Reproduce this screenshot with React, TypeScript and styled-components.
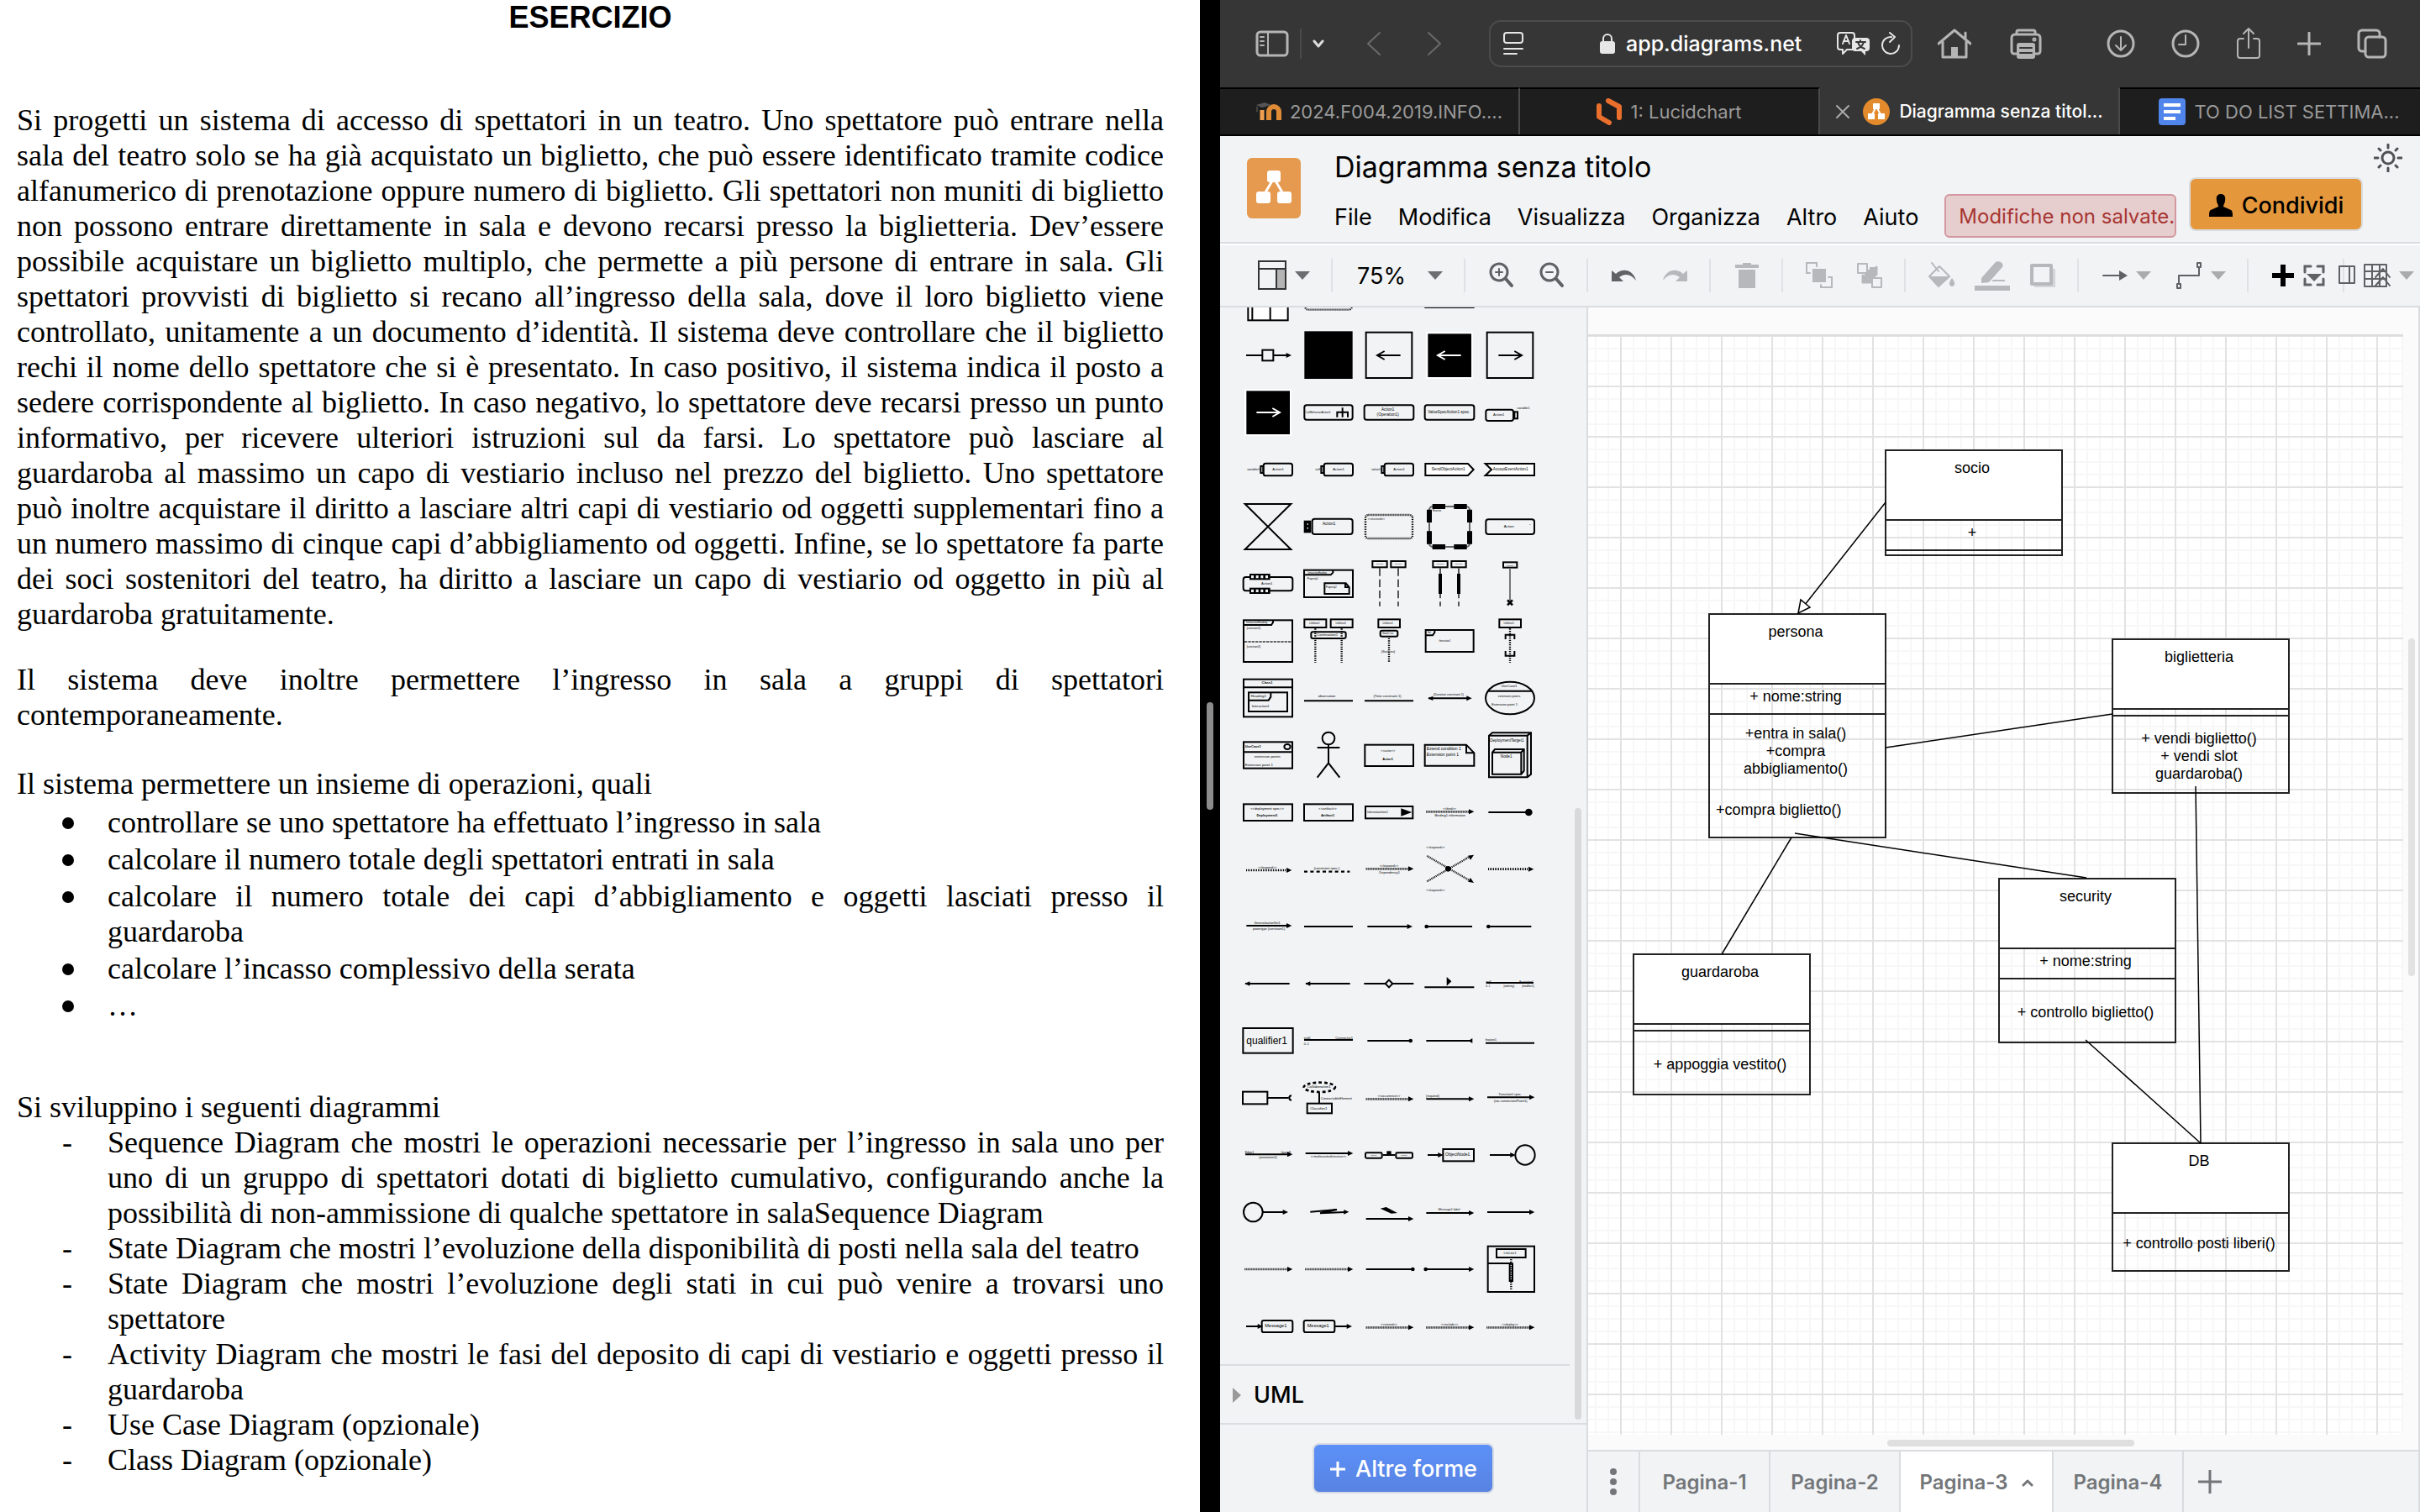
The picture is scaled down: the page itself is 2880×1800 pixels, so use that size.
import React from "react";
import styled, { createGlobalStyle, css } from "styled-components";

const ui = `Inter, "Liberation Sans", sans-serif`;
const LINE = "#dadce0";
const PANEL = "#f1f3f5";

const Global = createGlobalStyle`
  * { box-sizing: border-box; }
  html, body { margin: 0; height: 100%; background: #000; }
  #root { height: 100%; }
  body { overflow: hidden; }
  button, input, select { font: inherit; color: inherit; margin: 0; padding: 0; border: 0; background: none; border-radius: 0; }
`;

const Screen = styled.div`
  display: grid;
  grid-template-columns: minmax(0, 1fr) 24px minmax(0, 1fr);
  grid-template-rows: minmax(0, 1fr);
  height: 100vh;
  min-height: 900px;
  background: #000;
`;

/* ---------- left: exercise text ---------- */

const Doc = styled.article`
  overflow: hidden;
  background: #fff;
  color: #000;
  padding: 0 43px 0 20px;
  font: 36px/42px "Liberation Serif", "Times New Roman", serif;
  text-align: justify;
`;
const DocTitle = styled.h1`
  margin: 0;
  text-align: center;
  font: bold 36px/42px "Liberation Sans", Arial, sans-serif;
`;
const Para = styled.p<{ $gap: number }>`
  margin: ${(p) => p.$gap}px 0 0;
`;
const List = styled.ul<{ $gap: number }>`
  list-style: none;
  margin: ${(p) => p.$gap * 2}px 0 0;
  padding: 0 0 0 54px;
  display: flex;
  flex-direction: column;
  gap: ${(p) => p.$gap}px;
`;
const Item = styled.li<{ $mark: "dot" | "dash" }>`
  display: grid;
  grid-template-columns: 54px 1fr;
  &::before {
    ${(p) =>
      p.$mark === "dot"
        ? css`
            content: "";
            width: 14px;
            height: 14px;
            border-radius: 50%;
            background: #000;
            margin-top: 15px;
          `
        : css`
            content: "-";
          `}
  }
`;

const Divider = styled.div`
  display: flex;
  align-items: center;
  justify-content: center;
  background: #000;
  &::after {
    content: "";
    width: 8px;
    height: 128px;
    border-radius: 4px;
    background: #8c8c8c;
  }
`;

/* ---------- right: browser ---------- */

const Browser = styled.section`
  display: flex;
  flex-direction: column;
  overflow: hidden;
  background: ${PANEL};
  font-family: ${ui};
`;
const Chrome = styled.header`
  flex: 0 0 104px;
  display: flex;
  align-items: center;
  padding: 0 39px 0 42px;
  background: #363636;
  color: #b5b5b5;
`;
const ChromeGroup = styled.div<{ $gap: number; $before?: number }>`
  flex: 0 0 auto;
  display: flex;
  align-items: center;
  gap: ${(p) => p.$gap}px;
  margin-left: ${(p) => p.$before ?? 0}px;
`;
const IconButton = styled.button`
  display: flex;
  align-items: center;
  justify-content: center;
`;
const Rule = styled.span`
  width: 2px;
  height: 36px;
  background: #4a4a4a;
`;
const Address = styled.div`
  flex: 1 1 504px;
  height: 56px;
  margin-left: 56px;
  display: flex;
  align-items: center;
  justify-content: space-between;
  padding: 0 12px 0 15px;
  border: 2px solid #4c4c4c;
  border-radius: 14px;
  color: #e6e6e6;
`;
const Host = styled.label`
  display: flex;
  align-items: center;
  gap: 13px;
  padding-left: 62px;
`;
const HostInput = styled.input`
  width: 222px;
  color: #fff;
  font: 500 25px/32px ${ui};
`;
const TabStrip = styled.nav`
  flex: 0 0 58px;
  display: grid;
  grid-template-columns: repeat(4, minmax(0, 1fr));
  border-bottom: 2px solid #000;
`;
const Tab = styled.button<{ $on?: boolean; $long?: boolean }>`
  display: flex;
  align-items: center;
  justify-content: center;
  gap: 10px;
  border-top: 2px solid ${(p) => (p.$on ? "#363636" : "#000")};
  border-right: 2px solid #4a4a4a;
  background: ${(p) => (p.$on ? "#363636" : "#1e1e1e")};
  color: ${(p) => (p.$on ? "#fff" : "#9a9a9a")};
  padding-left: ${(p) => (p.$long ? 22 : 0)}px;
  font: ${(p) => (p.$on ? "500 21px" : "400 22px")}/28px ${ui};
  white-space: nowrap;
  &:last-child { border-right: 0; }
`;

/* ---------- diagram editor ---------- */

const AppBar = styled.div`
  flex: 0 0 128px;
  display: flex;
  padding-left: 32px;
  border-bottom: 2px solid ${LINE};
  color: #000;
`;
const Logo = styled.div`
  flex: 0 0 64px;
  height: 72px;
  margin: 26px 40px 0 0;
  border-radius: 6px;
  background: #e59a50;
`;
const Heading = styled.div`
  flex: 1 1 auto;
  min-width: 0;
  display: flex;
  flex-direction: column;
`;
const FileName = styled.h2`
  margin: 14px 0 0;
  font: 400 34px/46px ${ui};
`;
const MenuRow = styled.div`
  display: flex;
  align-items: center;
  height: 52px;
  margin-top: 9px;
  gap: 31px;
`;
const MenuItem = styled.button`
  padding-top: 3px;
  font: 400 27px/36px ${ui};
`;
const Unsaved = styled.button`
  flex: 0 0 274px;
  height: 52px;
  padding: 2px 0 0 15px;
  text-align: left;
  white-space: nowrap;
  border: 2px solid #d3989f;
  border-radius: 6px;
  background: #e6cdce;
  color: #a73531;
  font: 400 24px/34px ${ui};
`;
const Actions = styled.div`
  display: flex;
  flex: 0 0 275px;
`;
const Share = styled.button`
  flex: 0 0 207px;
  height: 64px;
  margin: 49px 13px 0 0;
  padding-top: 4px;
  display: flex;
  align-items: center;
  justify-content: center;
  gap: 10px;
  border: 2px solid ${LINE};
  border-radius: 8px;
  background: #e5983b;
  font: 500 27px/36px ${ui};
`;
const ThemeButton = styled(IconButton)`
  width: 34px;
  height: 34px;
  margin-top: 9px;
`;
const Tools = styled.div`
  flex: 0 0 76px;
  display: flex;
  align-items: center;
  border-top: 2px solid #fff;
  border-bottom: 2px solid ${LINE};
  overflow: hidden;
`;
const ToolGroup = styled.div<{ $start?: boolean; $tight?: boolean }>`
  flex: 0 0 auto;
  display: flex;
  align-items: center;
  height: 40px;
  gap: ${(p) => (p.$tight ? 10 : 0)}px;
  padding: 0 ${(p) => (p.$tight ? 0 : p.$start ? 12 : 11)}px 0 ${(p) => (p.$start ? 32 : p.$tight ? 27 : 13)}px;
  border-right: ${(p) => (p.$tight ? 0 : 2)}px solid #dfe1e4;
`;
const Tool = styled.button<{ $w?: number; $dim?: boolean }>`
  flex: 0 0 ${(p) => p.$w ?? 60}px;
  height: 40px;
  display: flex;
  align-items: center;
  justify-content: center;
  gap: 10px;
  color: #5f6265;
  opacity: ${(p) => (p.$dim ? 0.4 : 1)};
`;
const ZoomBox = styled.label`
  width: 132px;
  display: flex;
  align-items: center;
  justify-content: space-between;
  padding: 0 14px 0 16px;
`;
const ZoomSelect = styled.select`
  appearance: none;
  width: 70px;
  padding-top: 2px;
  color: #000;
  font: 400 27px/36px ${ui};
`;

const Workspace = styled.div`
  flex: 1 1 0;
  min-height: 0;
  display: flex;
`;
const Sidebar = styled.aside`
  flex: 0 0 438px;
  display: flex;
  flex-direction: column;
  border-right: 2px solid ${LINE};
`;
const Library = styled.div`
  flex: 1 1 0;
  min-height: 0;
  display: flex;
  border-bottom: 2px solid ${LINE};
`;
const LibraryBody = styled.div`
  flex: 1 1 0;
  display: flex;
  flex-direction: column;
  justify-content: flex-end;
  overflow: hidden;
`;
const ShapeGrid = styled.div`
  flex: 0 0 auto;
  display: grid;
  grid-template-columns: repeat(5, 72px);
  grid-auto-rows: 68px;
  padding: 0 0 11px 21px;
`;
const Section = styled.button`
  flex: 0 0 70px;
  display: flex;
  align-items: center;
  gap: 15px;
  padding: 2px 0 0 15px;
  border-top: 2px solid ${LINE};
  color: #000;
  font: 500 27px/34px ${ui};
`;
const LibraryGutter = styled.div`
  flex: 0 0 20px;
  display: flex;
  align-items: flex-end;
  padding: 0 6px 4px;
  &::after {
    content: "";
    width: 8px;
    height: 55%;
    border-radius: 4px;
    background: #d8d9db;
  }
`;
const SidebarFoot = styled.div`
  flex: 0 0 104px;
  display: flex;
  align-items: center;
  justify-content: center;
`;
const MoreShapes = styled.button`
  width: 216px;
  height: 60px;
  padding-top: 2px;
  display: flex;
  align-items: center;
  justify-content: center;
  gap: 11px;
  border: 2px solid #d6dae2;
  border-radius: 8px;
  background: linear-gradient(#5c90f7, #5883e2);
  color: #fff;
  font: 500 27px/36px ${ui};
`;

const Stage = styled.main`
  flex: 1 1 0;
  min-width: 0;
  display: flex;
  flex-direction: column;
  background: #fbfbfb;
  border-right: 2px solid ${LINE};
`;
const StageRow = styled.div`
  flex: 1 1 0;
  min-height: 0;
  display: flex;
`;
const SheetColumn = styled.div`
  flex: 1 1 0;
  min-width: 0;
  padding-top: 32px;
  display: flex;
`;
const Sheet = styled.div`
  position: relative;
  flex: 1 1 0;
  overflow: hidden;
  border-top: 2px solid #dcdcdc;
  background-color: #fff;
  background-image:
    linear-gradient(to right, #e2e2e2 2px, transparent 2px),
    linear-gradient(#e2e2e2 2px, transparent 2px),
    linear-gradient(to right, #f7f7f7 2px, transparent 2px),
    linear-gradient(#f7f7f7 2px, transparent 2px);
  background-size: 60px 60px, 60px 60px, 15px 15px, 15px 15px;
  background-position: 38px 0, 0 59px, 8px 0, 0 14px;
`;
const VGutter = styled.div`
  flex: 0 0 18px;
  padding: 394px 4px 0 6px;
  &::after {
    content: "";
    display: block;
    width: 8px;
    height: 402px;
    border-radius: 4px;
    background: #e2e2e2;
  }
`;
const HGutter = styled.div`
  flex: 0 0 18px;
  display: flex;
  justify-content: center;
  align-items: center;
  padding: 2px 0 0 18px;
  &::after {
    content: "";
    width: 294px;
    height: 8px;
    border-radius: 4px;
    background: #dfdfdf;
  }
`;
const Wires = styled.svg`
  position: absolute;
  left: 0;
  top: 0;
`;
const ClassBox = styled.div<{ $x: number; $y: number }>`
  position: absolute;
  left: ${(p) => p.$x}px;
  top: ${(p) => p.$y}px;
  width: 212px;
  border: 2px solid #222;
  color: #000;
  text-align: center;
  font: 18px/21px "Liberation Sans", Helvetica, Arial, sans-serif;
`;
const pads = { head: "10px 4px 0 0", fields: "0 4px 6px 0", methods: "4px 4px 0 0" };
const Compartment = styled.div<{ $h: number; $kind: keyof typeof pads }>`
  height: ${(p) => p.$h}px;
  display: flex;
  flex-direction: column;
  align-items: center;
  justify-content: ${(p) => (p.$kind === "head" ? "flex-start" : "center")};
  padding: ${(p) => pads[p.$kind]};
  background: ${(p) => (p.$kind === "head" ? "#fff" : "transparent")};
  & + & { border-top: 2px solid #222; }
`;
const LeftNote = styled.span`
  align-self: flex-start;
  padding: 28px 0 14px 7px;
`;

const Pages = styled.nav`
  flex: 0 0 74px;
  display: flex;
  border-top: 2px solid ${LINE};
  background: ${PANEL};
  color: #737679;
`;
const PageMenu = styled(IconButton)`
  flex: 0 0 62px;
  border-right: 2px solid ${LINE};
`;
const PageTab = styled.button<{ $on?: boolean }>`
  flex: 0 0 ${(p) => (p.$on ? 182 : 155)}px;
  padding-top: 2px;
  display: flex;
  align-items: center;
  justify-content: center;
  gap: 16px;
  border-right: 2px solid ${LINE};
  background: ${(p) => (p.$on ? "#fff" : "transparent")};
  font: 600 24px/32px ${ui};
`;
const AddPage = styled(IconButton)`
  width: 62px;
`;

/* ---------- small drawing helpers ---------- */

type PicProps = { w: number; h: number; sw?: number; children: React.ReactNode };
const Pic = ({ w, h, sw = 3, children }: PicProps) => (
  <svg width={w} height={h} viewBox={`0 0 ${w} ${h}`} fill="none" stroke="currentColor" strokeWidth={sw} strokeLinecap="round" strokeLinejoin="round" aria-hidden="true">
    {children}
  </svg>
);
const Caret = ({ tone = "#6b6e71" }: { tone?: string }) => (
  <Pic w={18} h={12}>
    <path d="M0 1H18L9 11Z" fill={tone} stroke="none" />
  </Pic>
);
const Tree = ({ size }: { size: number }) => (
  <svg width={size} height={(size * 72) / 64} viewBox="0 0 64 72" aria-hidden="true">
    <path d="M32 24L19 46M32 24L45 46" stroke="#fff" strokeWidth="3" />
    <g fill="#fff">
      <rect x="24" y="15" width="16" height="14" rx="3" />
      <rect x="11" y="40" width="17" height="14" rx="3" />
      <rect x="36" y="40" width="17" height="14" rx="3" />
    </g>
  </svg>
);

/* Library thumbnails: each cell is drawn in a 216 x 204 box with its origin in the middle. */

const B = ({ x, y, x2, y2, r = 0, fill = "none" }: { x: number; y: number; x2: number; y2: number; r?: number; fill?: string }) => (
  <rect x={x} y={y} width={x2 - x} height={y2 - y} rx={r} fill={fill} />
);
const T = ({ x = 0, y, s = 11, a = "middle", b, children }: { x?: number; y: number; s?: number; a?: "start" | "middle" | "end"; b?: boolean; children: React.ReactNode }) => (
  <text x={x} y={y} fontSize={s} textAnchor={a} fontWeight={b ? 700 : 400} fill="#000" stroke="none">
    {children}
  </text>
);
type End = "none" | "tri" | "dot";
const A = ({ x, x2, y = 0, from = "none", to = "none", dots }: { x: number; x2: number; y?: number; from?: End; to?: End; dots?: boolean }) => (
  <g>
    <path d={`M${x} ${y}H${to === "tri" ? x2 - 10 : x2}`} strokeDasharray={dots ? "3 3" : undefined} strokeWidth={dots ? 8 : 6} />
    {to === "tri" && <path d={`M${x2 - 17} ${y - 9}L${x2 + 2} ${y}L${x2 - 17} ${y + 9}Z`} fill="#000" stroke="none" />}
    {to === "dot" && <circle cx={x2 - 5} cy={y} r="7" fill="#000" stroke="none" />}
    {from === "tri" && <path d={`M${x + 16} ${y - 8}L${x - 2} ${y}L${x + 16} ${y + 8}Z`} fill="#000" stroke="none" />}
    {from === "dot" && <circle cx={x + 5} cy={y} r="7" fill="#000" stroke="none" />}
  </g>
);
const BigArrow = ({ left, tone = "#000" }: { left?: boolean; tone?: string }) => (
  <path stroke={tone} d={left ? "M41 0H-40M-16 -15L-42 0L-16 15" : "M-41 0H40M16 -15L42 0L16 15"} />
);
const Inverted = ({ left }: { left?: boolean }) => (
  <g>
    <rect x="-84" y="-84" width="168" height="168" fill="#fff" stroke="none" />
    <rect x="-77" y="-77" width="155" height="155" fill="#000" stroke="none" />
    <BigArrow left={left} tone="#fff" />
  </g>
);
const LeftPin = ({ label }: { label: string }) => (
  <g>
    <B x={-16} y={-22} x2={87} y2={22} r={8} />
    <B x={-26} y={-12} x2={-17} y2={12} />
    <T x={36} y={2} s={12}>Action1</T>
    <T x={-30} y={2} a="end">{label}</T>
  </g>
);
const Lifelines = ({ bars }: { bars?: boolean }) => (
  <g>
    {[-33, 33].map((x) => (
      <g key={x}>
        <B x={x - 26} y={-81} x2={x + 26} y2={-59} />
        <T x={x} y={-68} s={7}>Lifeline1</T>
        <path d={`M${x} -56V80`} stroke="#555" strokeDasharray="28 12" />
        {bars && <path d={`M${x} -36V36`} strokeWidth="12" />}
      </g>
    ))}
  </g>
);
const Dots = ({ x, y, y2 }: { x: number; y: number; y2: number }) => <path d={`M${x} ${y}V${y2}`} strokeDasharray="4 4" strokeWidth="7" />;

const shapes: React.ReactNode[] = [
  /* activity partitions, only their lower edge shows */
  <g><B x={-71} y={-60} x2={71} y2={79} fill="#fff" /><path d="M-56 -60V79M8 -60V79" /></g>,
  <rect x="-84" y="-50" width="168" height="91" rx="12" strokeDasharray="3 3" strokeWidth="7" />,
  null,
  <B x={-86} y={-20} x2={86} y2={33} />,
  null,
  /* 0 */
  <g><A x={-78} x2={-20} /><B x={-20} y={-19} x2={19} y2={19} /><A x={20} x2={82} to="tri" /></g>,
  <rect x="-86" y="-86" width="172" height="170" fill="#000" stroke="none" />,
  <g><B x={-82} y={-82} x2={82} y2={81} /><BigArrow left /></g>,
  <Inverted left />,
  <g><B x={-82} y={-82} x2={82} y2={81} /><BigArrow /></g>,
  /* 1 */
  <Inverted />,
  <g><B x={-86} y={-26} x2={86} y2={26} r={8} /><T x={-82} y={3} s={10} a="start">CallBehaviorAction1</T><path d="M31 17V-1H69V17M50 -17V17" /></g>,
  <g><B x={-88} y={-26} x2={88} y2={26} r={8} /><T x={-4} y={-7} s={14}>Action1</T><T x={-4} y={12} s={14}>(Operation1)</T></g>,
  <g><B x={-88} y={-26} x2={88} y2={26} r={8} /><T x={-2} y={3} s={14}>ValueSpecAction1 spec.</T></g>,
  <g><B x={-86} y={-10} x2={12} y2={30} r={8} /><B x={16} y={-2} x2={27} y2={22} /><T x={-40} y={12} s={12}>Action1</T><T x={48} y={-13}>variable1</T></g>,
  /* 2 */
  <LeftPin label="variable1" />,
  <LeftPin label="self" />,
  <LeftPin label="value1" />,
  <g><path d="M-86 -21H66L86 0L66 21H-86Z" fill="#fff" /><T x={-4} y={2} s={14}>SendObjectAction1</T></g>,
  <g><path d="M-88 -21H87V21H-88L-66 0Z" fill="#fff" /><T x={2} y={2} s={14}>AcceptEventAction1</T></g>,
  /* 3 */
  <path d="M-82 -81H82L-82 81H82Z" />,
  <g><B x={-58} y={-28} x2={86} y2={27} r={9} /><rect x="-88" y="-22" width="26" height="44" fill="#000" stroke="none" /><path d="M-74 -12V12" stroke="#ccc" strokeDasharray="6 8" strokeWidth="4" /><T x={2} y={-5} s={14}>Action1</T></g>,
  <g><rect x="-84" y="-42" width="168" height="84" rx="10" strokeDasharray="3 3" strokeWidth="7" /><T x={-76} y={-25} s={9} a="start">&lt;&lt;structured&gt;&gt;</T></g>,
  <g><rect x="-72" y="-72" width="144" height="144" rx="12" stroke="#666" /><path strokeWidth="18" strokeDasharray="46 31" d="M-61 -72H63M-61 72H63M-72 -61V63M72 -61V63" /><T x={-60} y={-55} s={8} a="start">Reactive</T></g>,
  <g><B x={-86} y={-26} x2={87} y2={27} r={9} /><T x={-4} y={2} s={13}>Action</T><T x={72} y={0} s={10}>*</T></g>,
  /* 4 */
  <g><B x={-88} y={-24} x2={88} y2={25} r={9} />{[-25, 25].map((y) => <g key={y}><rect x="-66" y={y - 11} width="74" height="22" fill="#000" stroke="none" /><path d={`M-60 ${y}H2`} stroke={PANEL} strokeWidth="10" strokeDasharray="9 8" /></g>)}<T x={-4} y={2} s={12}>Action1</T></g>,
  <g><B x={-87} y={-49} x2={87} y2={48} /><path d="M-87 -32H8L16 -40V-49" /><T x={-40} y={-37} s={8}>InteractionHeading</T><T x={-76} y={-15} s={9} a="start">Property1</T><path d="M-14 -2H62L74 12V36H-14ZM60 0V12H74" /><T x={-10} y={14} s={9} a="start">Property2</T></g>,
  <Lifelines />,
  <Lifelines bars />,
  <g><B x={-24} y={-77} x2={25} y2={-58} /><T y={-64} s={7}>Lifeline1</T><path d="M0 -56V60" stroke="#777" /><path d="M-9 58L9 76M9 58L-9 76" strokeWidth="8" /></g>,
  /* 5 */
  <g><B x={-87} y={-74} x2={87} y2={75} /><path d="M-87 -57H12L18 -66V-74" /><T x={-40} y={-62} s={9}>InteractionHeading</T><T x={-76} y={-43} s={9} a="start">[constraint1]</T><path d="M-84 3H84" stroke="#666" strokeDasharray="10 3" /><T x={-76} y={25} s={9} a="start">[constraint2]</T></g>,
  <g><B x={-86} y={-77} x2={-8} y2={-48} /><B x={8} y={-77} x2={86} y2={-48} /><T x={-50} y={-60} s={10}>Lifeline1</T><T x={44} y={-60} s={10}>Lifeline2</T><Dots x={-47} y={-44} y2={78} /><Dots x={47} y={-44} y2={78} /><B x={-62} y={-32} x2={62} y2={-9} r={6} /><T x={-4} y={-18} s={12}>Continuation1</T></g>,
  <g><B x={-38} y={-77} x2={39} y2={-48} /><T x={-4} y={-60} s={10}>Lifeline1</T><B x={-31} y={-37} x2={31} y2={-16} r={6} /><T x={-4} y={-25} s={9}>State1 inv</T><Dots x={0} y={-10} y2={78} /><T x={-3} y={42}>{"{State inv}"}</T></g>,
  <g><B x={-85} y={-39} x2={86} y2={39} /><path d="M-85 -20H-60L-53 -30V-39" /><T x={-72} y={-28} s={8}>Ref</T><T x={-17} y={2} s={8}>Interaction1</T></g>,
  <g><B x={-38} y={-77} x2={39} y2={-48} /><T x={-4} y={-60} s={10}>Lifeline1</T><Dots x={0} y={-44} y2={78} /><path d="M-16 -6V-22H16V-6M-16 36V53H16V36" /></g>,
  /* 6 */
  <g><B x={-87} y={-67} x2={87} y2={67} /><path d="M-87 -38H87" /><T x={-3} y={-51} s={12} b>Class1</T><B x={-69} y={-20} x2={69} y2={48} /><path d="M-69 8H2L10 -4V-20" /><T x={-34} y={-2} s={13}>Heading1</T><T x={-58} y={34} s={12} a="start">Interaction1</T></g>,
  <g><A x={-87} x2={87} y={10} /><T x={-6} y={-2} s={12}>observation</T></g>,
  <g><A x={-87} x2={87} y={10} /><T x={-6} y={-2} s={12}>{"{Time constraint 1}"}</T></g>,
  <g><A x={-75} x2={78} y={1} from="tri" to="tri" /><T x={-3} y={-8} s={11}>{"{Duration constraint 1}"}</T></g>,
  <g><ellipse rx="87" ry="58" /><path d="M-78 -25H78" /><T x={-3} y={-40} s={12}>UseCase1</T><T x={-3} y={-3} s={11}>extension points</T><T x={-19} y={26} s={12}>Extension point 1</T></g>,
  /* 7 */
  <g><B x={-87} y={-47} x2={87} y2={47} /><path d="M-87 -11H87" /><ellipse cx="69" cy="-30" rx="11" ry="9" /><T x={-82} y={-28} s={12} a="start" b>UseCase1</T><T y={10} x={-2} s={13}>extension points</T><T x={-82} y={38} s={13} a="start">Extension point 1</T></g>,
  <g><circle cy="-60" r="22" /><path d="M0 -38V28M-40 -27H40M-40 80L0 28L40 80" /></g>,
  <g><B x={-86} y={-37} x2={87} y2={39} /><T x={-4} y={-12}>&lt;&lt;actor&gt;&gt;</T><T x={-4} y={18} s={12} b>Actor1</T></g>,
  <g><path d="M-88 -37H60L88 -8V38H-88ZM60 -37V-8H88" /><T x={-82} y={-19} s={15} a="start">Extend condition 1</T><T x={-82} y={2} s={15} a="start">Extension point 1</T></g>,
  <g><path d="M-75 -70L-63 -80H75V68L62 79H-75ZM-75 -70H62V79M62 -70L75 -80" /><path d="M-63 -10L-54 -21H50V56L40 68H-63ZM-63 -10H40V68M40 -10L50 -21" /><T x={-11} y={-49} s={14}>DeploymentTarget1</T><T x={-13} y={8} s={14}>Node1</T></g>,
  /* 8 */
  <g><B x={-87} y={-29} x2={87} y2={30} /><T x={-3} y={-10} s={12}>&lt;&lt;deployment spec&gt;&gt;</T><T x={-3} y={15} s={12} b>Deployment1</T></g>,
  <g><B x={-87} y={-29} x2={87} y2={30} /><T x={-3} y={-10} s={12}>&lt;&lt;artifact&gt;&gt;</T><T x={-3} y={15} s={12} b>Artifact1</T></g>,
  <g><B x={-84} y={-21} x2={85} y2={22} /><path d="M43 -14V14L82 0Z" fill="#000" stroke="none" /><T x={-78} y={2} s={10} a="start">InformationItem1</T></g>,
  <g><A x={-83} x2={86} y={-2} to="tri" dots /><T y={-10}>&lt;&lt;bind&gt;&gt;</T><T x={2} y={15} s={12}>Binding1 information</T></g>,
  <g><A x={-77} x2={60} /><circle cx="67" r="13" fill="#000" stroke="none" /></g>,
  /* 9 */
  <g><A x={-78} x2={83} y={3} to="tri" dots /><T x={-2} y={-4}>&lt;&lt;keyword&gt;&gt;</T></g>,
  <g><path d="M-87 8H76" strokeDasharray="12 10" strokeWidth="7" /><T x={-6} y={1} s={12}>{"{constraint spec.}"}</T></g>,
  <g><A x={-82} x2={86} y={-2} to="tri" dots /><T y={-10}>&lt;&lt;keyword&gt;&gt;</T><T x={2} y={14} s={12}>Dependency1</T></g>,
  <g><path d="M-80 -48L76 42M-80 43L76 -48" strokeDasharray="3 3" strokeWidth="7" /><path d="M87 -52L66 -49L75 -34ZM87 48L66 44L75 30Z" fill="#000" stroke="none" /><circle cx="-5" cy="-2" r="10" fill="#000" stroke="none" /><T x={-83} y={-76} a="start">&lt;&lt;keyword&gt;&gt;</T><T x={-83} y={79} a="start">&lt;&lt;keyword&gt;&gt;</T></g>,
  <A x={-78} x2={83} y={-1} to="tri" dots />,
  /* 10 */
  <g><A x={-77} x2={83} y={-3} to="tri" /><T x={-3} y={-9}>GeneralizationSet1</T><T x={3} y={13}>powertype {"{constraint1}"}</T></g>,
  <A x={-87} x2={87} />,
  <A x={-77} x2={82} to="tri" />,
  <A x={-87} x2={81} from="dot" />,
  <A x={-82} x2={76} from="dot" />,
  /* 11 */
  <A x={-81} x2={77} from="tri" />,
  <A x={-81} x2={77} from="tri" />,
  <g><A x={-89} x2={88} /><path d="M-13 0L0 -13L13 0L0 13Z" fill={PANEL} /></g>,
  <g><A x={-89} x2={88} y={13} /><path d="M-10 -24L7 -8L-10 8Z" fill="#000" stroke="none" /></g>,
  <g><A x={-85} x2={84} y={-3} /><T x={-86} y={-4} s={9} a="start">end1</T><T x={84} y={-4} s={9} a="end">Association1</T><T x={-86} y={11} s={9} a="start">0..1</T><T x={-4} y={11} s={9}>{"{ordering}"}</T><T x={86} y={11} s={9} a="end">{"{modifier1}"}</T></g>,
  /* 12 */
  <g><B x={-89} y={-45} x2={89} y2={44} /><T x={-4} y={13} s={36}>qualifier1</T></g>,
  <g><A x={-87} x2={87} y={-3} /><T x={-88} y={-5} s={11} a="start">end1</T><T x={87} y={-5} s={12} a="end">Connector1</T><T x={-88} y={15} s={11} a="start">0..1</T></g>,
  <A x={-77} x2={82} to="dot" />,
  <g><A x={-83} x2={74} /><path d="M82 -9L68 0L82 9Z" fill="#000" stroke="none" /></g>,
  <g><A x={-87} x2={87} y={8} /><T x={-88} y={-1} a="start">feature1</T></g>,
  /* 13 */
  <g><B x={-90} y={-22} x2={-2} y2={22} /><A x={0} x2={74} /><path d="M84 -8A8 8 0 0 0 84 8" /></g>,
  <g><ellipse cx="-32" cy="-38" rx="56" ry="17" strokeDasharray="11 9" strokeWidth="8" /><path d="M-33 -20V20" /><B x={-76} y={20} x2={12} y2={55} /><T x={-34} y={-35} s={13}>Collaboration1</T><T x={28} y={5} s={12}>ConnectableElement</T><T x={-35} y={41} s={13}>Classifier1</T></g>,
  <g><A x={-82} x2={86} y={4} to="tri" dots /><T y={-4}>&lt;&lt;occurrence&gt;&gt;</T></g>,
  <g><A x={-83} x2={86} y={4} to="tri" /><T x={-84} y={-4} a="start">{"{required}"}</T></g>,
  <g><A x={-81} x2={86} y={-2} to="tri" /><T y={-10}>Transition1 spec.</T><T x={2} y={14} s={12}>(via connectionPoint1)</T></g>,
  /* 14 */
  <g><A x={-81} x2={86} y={-2} to="tri" /><T x={-82} y={-5} a="start">Edge1</T><T x={82} y={-5} a="end">{"{guard}"}</T><T y={13}>{"{annotation1}"}</T></g>,
  <g><A x={-82} x2={86} y={-6} to="tri" /><T y={9}>&lt;&lt;multicastmultireceive&gt;&gt;</T></g>,
  <g><B x={-84} y={-8} x2={-25} y2={11} r={4} /><B x={25} y={-8} x2={84} y2={11} r={4} /><A x={-22} x2={22} /><rect x="-8" y="-14" width="16" height="14" fill="#000" stroke="none" /><T x={-56} y={3} s={7}>Action1</T><T x={52} y={3} s={7}>Action2</T></g>,
  <g><A x={-78} x2={-24} to="tri" /><B x={-23} y={-21} x2={87} y2={22} /><T x={29} y={3} s={15}>ObjectNode1</T></g>,
  <g><A x={-72} x2={18} to="tri" /><circle cx="54" r="35" /></g>,
  /* 15 */
  <g><circle cx="-53" r="34" /><A x={-18} x2={70} to="tri" /></g>,
  <g><path d="M-65 -1L30 -9L-30 4L58 0" /><path d="M55 -9L73 -1L55 8Z" fill="#000" stroke="none" /></g>,
  <g><A x={-82} x2={86} y={24} to="tri" /><path d="M-31 -13L-10 -18L30 3L8 5Z" fill="#000" stroke="none" /></g>,
  <g><A x={-83} x2={86} y={3} to="tri" /><T x={-1} y={-5}>Message1 label</T></g>,
  <A x={-81} x2={86} to="tri" />,
  /* 16 */
  <A x={-83} x2={86} to="tri" dots />,
  <A x={-83} x2={86} to="tri" dots />,
  <A x={-82} x2={90} to="dot" />,
  <A x={-90} x2={86} from="dot" to="tri" />,
  <g><B x={-79} y={-82} x2={87} y2={81} /><B x={-48} y={-72} x2={56} y2={-42} /><T x={0} y={-55} s={11}>LifeLine1</T><Dots x={4} y={-36} y2={75} /><path d="M-79 -21H4" /><B x={-1} y={-20} x2={9} y2={42} /></g>,
  /* 17 */
  <g><A x={-78} x2={-20} to="tri" /><B x={-22} y={-21} x2={88} y2={21} r={7} /><T x={28} y={3} s={17}>Message1</T></g>,
  <g><B x={-88} y={-21} x2={22} y2={21} r={7} /><A x={24} x2={82} to="tri" /><T x={-37} y={3} s={17}>Message1</T></g>,
  <g><A x={-82} x2={86} y={4} to="tri" dots /><T y={-4}>&lt;&lt;extend&gt;&gt;</T></g>,
  <g><A x={-83} x2={86} y={4} to="tri" dots /><T y={-4}>&lt;&lt;include&gt;&gt;</T></g>,
  <g><A x={-83} x2={86} y={4} to="tri" dots /><T y={-4}>&lt;&lt;deploy&gt;&gt;</T></g>,
];

const Thumb = ({ children }: { children: React.ReactNode }) => (
  <svg width="72" height="68" viewBox="-108 -102 216 204" fill="none" stroke="#000" strokeWidth="6" fontFamily="Liberation Sans, Arial, sans-serif" aria-hidden="true">
    {children}
  </svg>
);

/* ---------- class diagram ---------- */

const Diagram = () => (
  <Sheet>
    <ClassBox $x={353} $y={135}>
      <Compartment $h={81} $kind="head">socio</Compartment>
      <Compartment $h={36} $kind="fields">+</Compartment>
      <Compartment $h={6} $kind="methods" />
    </ClassBox>
    <ClassBox $x={143} $y={330}>
      <Compartment $h={81} $kind="head">persona</Compartment>
      <Compartment $h={36} $kind="fields">+ nome:string</Compartment>
      <Compartment $h={147} $kind="methods">
        <span>+entra in sala()</span>
        <span>+compra</span>
        <span>abbigliamento()</span>
        <LeftNote>+compra biglietto()</LeftNote>
      </Compartment>
    </ClassBox>
    <ClassBox $x={623} $y={360}>
      <Compartment $h={81} $kind="head">biglietteria</Compartment>
      <Compartment $h={6} $kind="fields" />
      <Compartment $h={92} $kind="methods">
        <span>+ vendi biglietto()</span>
        <span>+ vendi slot</span>
        <span>guardaroba()</span>
      </Compartment>
    </ClassBox>
    <ClassBox $x={488} $y={645}>
      <Compartment $h={81} $kind="head">security</Compartment>
      <Compartment $h={36} $kind="fields">+ nome:string</Compartment>
      <Compartment $h={76} $kind="methods">+ controllo biglietto()</Compartment>
    </ClassBox>
    <ClassBox $x={53} $y={735}>
      <Compartment $h={81} $kind="head">guardaroba</Compartment>
      <Compartment $h={6} $kind="fields" />
      <Compartment $h={76} $kind="methods">+ appoggia vestito()</Compartment>
    </ClassBox>
    <ClassBox $x={623} $y={960}>
      <Compartment $h={81} $kind="head">DB</Compartment>
      <Compartment $h={69} $kind="methods">+ controllo posti liberi()</Compartment>
    </ClassBox>
    <Wires width="960" height="1200" viewBox="0 0 960 1200" fill="none" stroke="#000" strokeWidth="1.5" aria-hidden="true">
      <path d="M354 198L250 330" />
      <path d="M250 330L253 314L264 323Z" fill="#fff" />
      <path d="M354 490L624 450M242 597L159 736M246 592L593 645M723 536L729 961M592 838L729 961" />
    </Wires>
  </Sheet>
);

export default function App() {
  return (
    <Screen>
      <Global />
      <Doc lang="it">
        <DocTitle>ESERCIZIO</DocTitle>
        <Para $gap={80}>
          Si progetti un sistema di accesso di spettatori in un teatro. Uno spettatore può entrare nella sala del teatro solo se ha già acquistato un biglietto, che può essere identificato tramite codice alfanumerico di prenotazione oppure numero di biglietto. Gli spettatori non muniti di biglietto non possono entrare direttamente in sala e devono recarsi presso la biglietteria. Dev’essere possibile acquistare un biglietto multiplo, che permette a più persone di entrare in sala. Gli spettatori provvisti di biglietto si recano all’ingresso della sala, dove il loro biglietto viene controllato, unitamente a un documento d’identità. Il sistema deve controllare che il biglietto rechi il nome dello spettatore che si è presentato. In caso positivo, il sistema indica il posto a sedere corrispondente al biglietto. In caso negativo, lo spettatore deve recarsi presso un punto informativo, per ricevere ulteriori istruzioni sul da farsi. Lo spettatore può lasciare al guardaroba al massimo un capo di vestiario incluso nel prezzo del biglietto. Uno spettatore può inoltre acquistare il diritto a lasciare altri capi di vestiario od oggetti supplementari fino a un numero massimo di cinque capi d’abbigliamento od oggetti. Infine, se lo spettatore fa parte dei soci sostenitori del teatro, ha diritto a lasciare un capo di vestiario od oggetto in più al guardaroba gratuitamente.
        </Para>
        <Para $gap={36}>Il sistema deve inoltre permettere l’ingresso in sala a gruppi di spettatori contemporaneamente.</Para>
        <Para $gap={40}>Il sistema permettere un insieme di operazioni, quali</Para>
        <List $gap={2}>
          <Item $mark="dot">controllare se uno spettatore ha effettuato l’ingresso in sala</Item>
          <Item $mark="dot">calcolare il numero totale degli spettatori entrati in sala</Item>
          <Item $mark="dot">calcolare il numero totale dei capi d’abbigliamento e oggetti lasciati presso il guardaroba</Item>
          <Item $mark="dot">calcolare l’incasso complessivo della serata</Item>
          <Item $mark="dot">…</Item>
        </List>
        <Para $gap={79}>Si sviluppino i seguenti diagrammi</Para>
        <List $gap={0}>
          <Item $mark="dash">Sequence Diagram che mostri le operazioni necessarie per l’ingresso in sala uno per uno di un gruppo di spettatori dotati di biglietto cumulativo, configurando anche la possibilità di non-ammissione di qualche spettatore in salaSequence Diagram</Item>
          <Item $mark="dash">State Diagram che mostri l’evoluzione della disponibilità di posti nella sala del teatro</Item>
          <Item $mark="dash">State Diagram che mostri l’evoluzione degli stati in cui può venire a trovarsi uno spettatore</Item>
          <Item $mark="dash">Activity Diagram che mostri le fasi del deposito di capi di vestiario e oggetti presso il guardaroba</Item>
          <Item $mark="dash">Use Case Diagram (opzionale)</Item>
          <Item $mark="dash">Class Diagram (opzionale)</Item>
        </List>
      </Doc>

      <Divider />

      <Browser>
        <Chrome>
          <ChromeGroup $gap={13}>
            <IconButton aria-label="Barra laterale">
              <Pic w={40} h={32} sw={2}>
                <rect x="2" y="2" width="36" height="28" rx="4" strokeWidth="3" />
                <path d="M15 2V30M6 8H10M6 13H10M6 18H10" />
              </Pic>
            </IconButton>
            <Rule />
            <IconButton aria-label="Gruppi di pannelli">
              <Pic w={14} h={12}><path d="M2 3L7 9L12 3" stroke="#ddd" /></Pic>
            </IconButton>
          </ChromeGroup>
          <ChromeGroup $gap={54} $before={50}>
            <IconButton aria-label="Indietro"><Pic w={18} h={30} sw={2}><path d="M16 2L2 15L16 28" stroke="#6a6a6a" /></Pic></IconButton>
            <IconButton aria-label="Avanti"><Pic w={18} h={30} sw={2}><path d="M2 2L16 15L2 28" stroke="#6a6a6a" /></Pic></IconButton>
          </ChromeGroup>
          <Address>
            <IconButton aria-label="Mostra Reader">
              <Pic w={24} h={28} sw={2}><rect x="1" y="1" width="22" height="12" rx="3" /><path d="M1 20H23M1 26H16" /></Pic>
            </IconButton>
            <Host>
              <Pic w={18} h={26}>
                <rect x="0" y="10" width="18" height="15" rx="3" fill="currentColor" stroke="none" />
                <path d="M4 11V7A5 5 0 0 1 14 7V11" strokeWidth="2" />
              </Pic>
              <HostInput aria-label="Indirizzo" defaultValue="app.diagrams.net" />
            </Host>
            <ChromeGroup $gap={12}>
              <IconButton aria-label="Traduci">
                <Pic w={40} h={30} sw={2}>
                  <path d="M19 22H12L7 27V22H4A3 3 0 0 1 1 19V5A3 3 0 0 1 4 2H18A3 3 0 0 1 21 5V8M7 15L11 5L15 15M8 12H14" />
                  <path d="M21 8H35A4 4 0 0 1 39 12V20A4 4 0 0 1 35 24H34V29L29 24H21A4 4 0 0 1 18 20V12A4 4 0 0 1 21 8Z" fill="currentColor" stroke="none" />
                  <path d="M23 13H34M28 11V13M25 13C26 17 30 20 33 21M32 13C31 17 27 20 24 21" stroke="#363636" />
                </Pic>
              </IconButton>
              <IconButton aria-label="Ricarica">
                <Pic w={24} h={28} sw={2}><path d="M13 6A10 10 0 1 0 22 16M11 1L17 6L11 12" /></Pic>
              </IconButton>
            </ChromeGroup>
          </Address>
          <ChromeGroup $gap={46} $before={30}>
            <IconButton aria-label="Pagina iniziale">
              <Pic w={40} h={36}><path d="M1 18L20 2L39 18M6 16V34H34V16M33 12V5" /><path d="M16 34V22H24V34Z" fill="currentColor" stroke="none" /></Pic>
            </IconButton>
            <IconButton aria-label="Stampa">
              <Pic w={38} h={36}>
                <path d="M8 30H5A3 3 0 0 1 2 27V11A4 4 0 0 1 6 7H32A4 4 0 0 1 36 11V27A3 3 0 0 1 33 30H30M8 7V4A2 2 0 0 1 10 2H28A2 2 0 0 1 30 4V7" />
                <rect x="8" y="17" width="22" height="19" rx="3" fill="currentColor" stroke="none" />
                <path d="M12 23H26M12 29H26" stroke="#363636" strokeWidth="2" />
                <circle cx="29" cy="13" r="1" />
              </Pic>
            </IconButton>
          </ChromeGroup>
          <ChromeGroup $gap={43} $before={77}>
            <IconButton aria-label="Download"><Pic w={34} h={36} sw={2}><circle cx="17" cy="18" r="15" strokeWidth="3" /><path d="M17 10V26M11 20L17 26L23 20" /></Pic></IconButton>
            <IconButton aria-label="Cronologia"><Pic w={34} h={36} sw={2}><circle cx="17" cy="18" r="15" strokeWidth="3" /><path d="M17 8V19H9" /></Pic></IconButton>
            <IconButton aria-label="Condividi pagina"><Pic w={30} h={40}><path d="M9 14H5A3 3 0 0 0 2 17V34A3 3 0 0 0 5 37H25A3 3 0 0 0 28 34V17A3 3 0 0 0 25 14H21M15 25V3M9 8L15 2L21 8" strokeWidth="2" /></Pic></IconButton>
            <IconButton aria-label="Nuovo pannello"><Pic w={28} h={28}><path d="M14 1V27M1 14H27" /></Pic></IconButton>
            <IconButton aria-label="Panoramica"><Pic w={36} h={36}><rect x="10" y="10" width="24" height="24" rx="4" /><path d="M10 27H6A4 4 0 0 1 2 23V6A4 4 0 0 1 6 2H23A4 4 0 0 1 27 6V10" /></Pic></IconButton>
          </ChromeGroup>
        </Chrome>

        <TabStrip>
          <Tab $long>
            <Pic w={32} h={24} sw={6}>
              <path d="M17 22V12A5 5 0 0 1 29 12V22" stroke="#e08c36" strokeLinecap="butt" />
              <path d="M9 10V22" stroke="#f0a050" strokeLinecap="butt" strokeWidth="5" />
              <path d="M2 4L12 1L20 4L9 7Z" fill="#555" stroke="none" />
              <path d="M3 6V12" stroke="#666" strokeWidth="1" />
            </Pic>
            2024.F004.2019.INFO....
          </Tab>
          <Tab>
            <Pic w={30} h={32} sw={6}>
              <path d="M3 9V22L15 29M14 3L27 10V23" stroke="#ea6f2d" />
            </Pic>
            1: Lucidchart
          </Tab>
          <Tab $on>
            <Pic w={18} h={18} sw={2}><path d="M2 2L16 16M16 2L2 16" stroke="#aaa" /></Pic>
            <svg width="38" height="32" viewBox="-5 0 38 32" aria-hidden="true">
              <circle cx="16" cy="16" r="16" fill="#e38b2c" />
              <path d="M16 10L10 21M16 10L22 21" stroke="#fff" strokeWidth="2" />
              <path d="M12 6H20V13H12ZM6 18H14V25H6ZM18 18H26V25H18Z" fill="#fff" />
            </svg>
            Diagramma senza titol...
          </Tab>
          <Tab $long>
            <svg width="32" height="32" viewBox="0 0 32 32" aria-hidden="true">
              <rect width="32" height="32" rx="4" fill="#5086ec" />
              <path d="M6 8H26M6 16H26M6 24H20" stroke="#fff" strokeWidth="4" />
            </svg>
            TO DO LIST SETTIMA...
          </Tab>
        </TabStrip>

        <AppBar>
          <Logo><Tree size={64} /></Logo>
          <Heading>
            <FileName>Diagramma senza titolo</FileName>
            <MenuRow>
              <MenuItem>File</MenuItem>
              <MenuItem>Modifica</MenuItem>
              <MenuItem>Visualizza</MenuItem>
              <MenuItem>Organizza</MenuItem>
              <MenuItem>Altro</MenuItem>
              <MenuItem>Aiuto</MenuItem>
              <Unsaved>Modifiche non salvate.</Unsaved>
            </MenuRow>
          </Heading>
          <Actions>
            <Share>
              <svg width="30" height="30" viewBox="0 0 30 30" aria-hidden="true">
                <path d="M15 1C19 1 21 4 20 9C20 12 18 13 18 16L27 20C29 21 29 24 29 28H1C1 24 1 21 3 20L12 16C12 13 10 12 10 9C9 4 11 1 15 1Z" />
              </svg>
              Condividi
            </Share>
            <ThemeButton aria-label="Aspetto">
              <Pic w={34} h={34} sw={3}>
                <g stroke="#4f5255"><circle cx="17" cy="17" r="7" /><path d="M17 1V5M17 29V33M1 17H5M29 17H33M6 6L8 8M26 26L28 28M28 6L26 8M8 26L6 28" /></g>
              </Pic>
            </ThemeButton>
          </Actions>
        </AppBar>

        <Tools>
          <ToolGroup $start>
            <Tool $w={88} aria-label="Vista">
              <Pic w={34} h={36} sw={2}>
                <g stroke="#333" strokeLinejoin="miter"><rect x="22" y="10" width="11" height="24" fill="#b4b4b4" /><rect x="1" y="1" width="32" height="33" /><path d="M1 10H33" /></g>
              </Pic>
              <Caret />
            </Tool>
          </ToolGroup>
          <ToolGroup>
            <ZoomBox>
              <ZoomSelect aria-label="Zoom" defaultValue="75"><option value="75">75%</option></ZoomSelect>
              <Caret />
            </ZoomBox>
          </ToolGroup>
          <ToolGroup>
            <Tool aria-label="Ingrandisci"><Pic w={30} h={32}><circle cx="12" cy="12" r="10" /><path d="M20 20L27 28" strokeWidth="4" /><path d="M12 8V16M8 12H16" strokeWidth="2" /></Pic></Tool>
            <Tool aria-label="Riduci"><Pic w={30} h={32}><circle cx="12" cy="12" r="10" /><path d="M20 20L27 28" strokeWidth="4" /><path d="M8 12H16" strokeWidth="2" /></Pic></Tool>
          </ToolGroup>
          <ToolGroup>
            <Tool aria-label="Annulla"><Pic w={32} h={18}><path d="M1 3V16H15L10 11C17 6 24 7 30 15C27 3 15 -1 6 7Z" fill="currentColor" stroke="none" /></Pic></Tool>
            <Tool $dim aria-label="Ripeti"><Pic w={32} h={18}><path d="M31 3V16H17L22 11C15 6 8 7 2 15C5 3 17 -1 26 7Z" fill="currentColor" stroke="none" /></Pic></Tool>
          </ToolGroup>
          <ToolGroup>
            <Tool $dim aria-label="Elimina"><Pic w={28} h={32}><path d="M0 3H9V1H19V3H28V7H0ZM4 9H24V31H4Z" fill="currentColor" stroke="none" /></Pic></Tool>
          </ToolGroup>
          <ToolGroup>
            <Tool $dim aria-label="Porta in primo piano"><Pic w={32} h={32} sw={2}><rect x="8" y="8" width="16" height="16" fill="currentColor" stroke="none" /><path d="M5 13H1V1H13V5M27 18H31V30H18V27" strokeLinejoin="miter" /></Pic></Tool>
            <Tool $dim aria-label="Porta in fondo"><Pic w={32} h={32} sw={2}><path d="M16 6H24V15H16ZM7 16H16V24H7Z" fill="currentColor" stroke="none" /><path d="M15 15H24V6M8 16V24H17" strokeWidth="3" /><rect x="10" y="9" width="13" height="14" fill="currentColor" stroke="none" /><rect x="2" y="2" width="11" height="11" fill="#f1f3f5" /><rect x="19" y="19" width="11" height="11" fill="#f1f3f5" /></Pic></Tool>
          </ToolGroup>
          <ToolGroup>
            <Tool $dim aria-label="Colore di riempimento"><Pic w={34} h={34}><path d="M5 2L13 12M14 6L2 18L13 30L26 18Z" strokeWidth="2" /><path d="M3 18H26L13 30Z" fill="currentColor" stroke="none" /><path d="M29 20C34 26 32 30 29 30C26 30 24 26 29 20Z" fill="currentColor" stroke="none" /></Pic></Tool>
            <Tool $dim aria-label="Colore della linea"><Pic w={42} h={38}><path d="M8 22L24 4C27 0 36 4 33 9L17 27L8 28ZM20 26H36V24H22ZM0 31H42V37H0Z" fill="currentColor" stroke="none" /></Pic></Tool>
            <Tool $dim aria-label="Ombra"><Pic w={30} h={30}><rect x="5" y="7" width="25" height="22" fill="currentColor" stroke="none" opacity="0.5" /><rect x="2" y="3" width="23" height="22" fill="#f1f3f5" strokeWidth="4" /></Pic></Tool>
          </ToolGroup>
          <ToolGroup>
            <Tool $w={88} aria-label="Connessione"><Pic w={30} h={14} sw={2}><path d="M1 7H22" /><path d="M20 1L30 7L20 13Z" fill="currentColor" stroke="none" /></Pic><Caret tone="#a9abad" /></Tool>
            <Tool $w={88} aria-label="Punti di passaggio"><Pic w={32} h={32} sw={2}><path d="M4 26V16H28V6" /><rect x="2" y="26" width="4" height="5" /><rect x="26" y="1" width="4" height="5" /></Pic><Caret tone="#a9abad" /></Tool>
          </ToolGroup>
          <ToolGroup $tight>
            <Tool $w={28} aria-label="Inserisci"><Pic w={28} h={28} sw={6}><path d="M14 1V27M1 14H27" stroke="#000" strokeLinecap="butt" /></Pic></Tool>
            <Tool $w={26} aria-label="Schermo intero"><Pic w={26} h={26} sw={2}><path d="M2 9V2H9M17 2H24V9M24 17V24H17M9 24H2V17" strokeWidth="3" strokeLinejoin="miter" /><path d="M4 11H22L13 20Z" fill="currentColor" stroke="none" /></Pic></Tool>
            <Tool $w={26} aria-label="Formato"><Pic w={26} h={40} sw={2}><path d="M12 0V40" stroke="#dfe1e4" /><rect x="7" y="9" width="18" height="20" /><path d="M19 9V29" /></Pic></Tool>
            <Tool $w={32} aria-label="Tabella"><Pic w={32} h={28} sw={2}><rect x="1" y="1" width="26" height="26" /><path d="M1 9H27M1 18H27M10 1V27M19 1V27M14 16L23 6L31 16M14 26L23 16L31 26" /></Pic></Tool>
            <Tool $w={18} aria-label="Altri strumenti"><Caret tone="#a9abad" /></Tool>
          </ToolGroup>
        </Tools>

        <Workspace>
          <Sidebar>
            <Library>
              <LibraryBody>
                <ShapeGrid>
                  {shapes.map((s, i) => (
                    <Thumb key={i}>{s}</Thumb>
                  ))}
                </ShapeGrid>
                <Section>
                  <Pic w={10} h={18}><path d="M0 0L10 9L0 18Z" fill="#999" stroke="none" /></Pic>
                  <span>UML</span>
                </Section>
              </LibraryBody>
              <LibraryGutter />
            </Library>
            <SidebarFoot>
              <MoreShapes>
                <Pic w={20} h={20}><path d="M10 1V19M1 10H19" strokeLinecap="butt" /></Pic>
                Altre forme
              </MoreShapes>
            </SidebarFoot>
          </Sidebar>
          <Stage>
            <StageRow>
              <SheetColumn>
                <Diagram />
              </SheetColumn>
              <VGutter />
            </StageRow>
            <HGutter />
            <Pages>
              <PageMenu aria-label="Pagine">
                <Pic w={8} h={34}><g fill="currentColor" stroke="none"><circle cx="4" cy="5" r="4" /><circle cx="4" cy="17" r="4" /><circle cx="4" cy="29" r="4" /></g></Pic>
              </PageMenu>
              <PageTab>Pagina-1</PageTab>
              <PageTab>Pagina-2</PageTab>
              <PageTab $on>
                Pagina-3
                <Pic w={14} h={10}><path d="M2 8L7 3L12 8" /></Pic>
              </PageTab>
              <PageTab>Pagina-4</PageTab>
              <AddPage aria-label="Inserisci pagina"><Pic w={28} h={28}><path d="M14 0V28M0 14H28" /></Pic></AddPage>
            </Pages>
          </Stage>
        </Workspace>
      </Browser>
    </Screen>
  );
}
